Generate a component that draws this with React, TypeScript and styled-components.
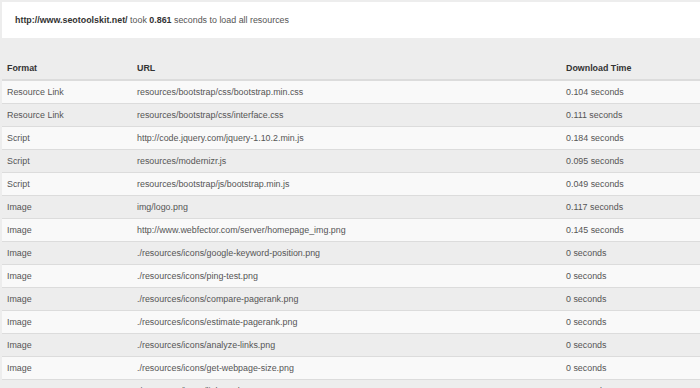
import React from "react";
import styled, { createGlobalStyle } from "styled-components";

interface IResource {
  format: string;
  url: string;
  time: string;
}

const resources: IResource[] = [
  { format: "Resource Link", url: "resources/bootstrap/css/bootstrap.min.css", time: "0.104 seconds" },
  { format: "Resource Link", url: "resources/bootstrap/css/interface.css", time: "0.111 seconds" },
  { format: "Script", url: "http://code.jquery.com/jquery-1.10.2.min.js", time: "0.184 seconds" },
  { format: "Script", url: "resources/modernizr.js", time: "0.095 seconds" },
  { format: "Script", url: "resources/bootstrap/js/bootstrap.min.js", time: "0.049 seconds" },
  { format: "Image", url: "img/logo.png", time: "0.117 seconds" },
  { format: "Image", url: "http://www.webfector.com/server/homepage_img.png", time: "0.145 seconds" },
  { format: "Image", url: "./resources/icons/google-keyword-position.png", time: "0 seconds" },
  { format: "Image", url: "./resources/icons/ping-test.png", time: "0 seconds" },
  { format: "Image", url: "./resources/icons/compare-pagerank.png", time: "0 seconds" },
  { format: "Image", url: "./resources/icons/estimate-pagerank.png", time: "0 seconds" },
  { format: "Image", url: "./resources/icons/analyze-links.png", time: "0 seconds" },
  { format: "Image", url: "./resources/icons/get-webpage-size.png", time: "0 seconds" },
  { format: "Image", url: "./resources/icons/link-analyzer.png", time: "0 seconds" },
];

const GlobalStyle = createGlobalStyle`
  html, body {
    margin: 0;
    background: #ededed;
  }
  body {
    font-family: "Liberation Sans", Arial, sans-serif;
    font-size: 8.9px;
    color: #555;
    overflow: hidden;
  }
`;

const Page = styled.div`
  padding: 2px 0 0 2px;
  width: 698px;
  height: 386px;
  overflow: hidden;
`;

const Summary = styled.div`
  background: #fff;
  height: 36px;
  display: flex;
  align-items: center;
  padding-left: 13px;
  color: #555;
`;

const Strong = styled.b`
  color: #333;
`;

const Table = styled.table`
  margin-top: 19px;
  width: 760px;
  border-collapse: separate;
  border-spacing: 0;
  table-layout: fixed;
`;

const HeadCell = styled.th<{ $width?: number }>`
  width: ${(p) => (p.$width ? `${p.$width}px` : "auto")};
  box-sizing: border-box;
  text-align: left;
  font-weight: bold;
  color: #333;
  padding: 4px 5px;
  line-height: 14px;
  border-bottom: 2px solid #dcdcdc;
`;

const Row = styled.tr<{ $striped: boolean }>`
  background: ${(p) => (p.$striped ? "#f9f9f9" : "transparent")};
  &:not(:first-child) > td {
    border-top: 1px solid #dcdcdc;
  }
`;

const Cell = styled.td`
  padding: 4px 5px;
  line-height: 14px;
  white-space: nowrap;
`;

const App: React.FunctionComponent = () => {
  return (
    <>
      <GlobalStyle />
      <Page>
        <Summary>
          <span>
            <Strong>http://www.seotoolskit.net/</Strong> took <Strong>0.861</Strong> seconds to load all
            resources
          </span>
        </Summary>
        <Table>
          <thead>
            <tr>
              <HeadCell $width={130}>Format</HeadCell>
              <HeadCell $width={429}>URL</HeadCell>
              <HeadCell>Download Time</HeadCell>
            </tr>
          </thead>
          <tbody>
            {resources.map((r, i) => (
              <Row key={i} $striped={i % 2 === 0}>
                <Cell>{r.format}</Cell>
                <Cell>{r.url}</Cell>
                <Cell>{r.time}</Cell>
              </Row>
            ))}
          </tbody>
        </Table>
      </Page>
    </>
  );
};

export default App;
